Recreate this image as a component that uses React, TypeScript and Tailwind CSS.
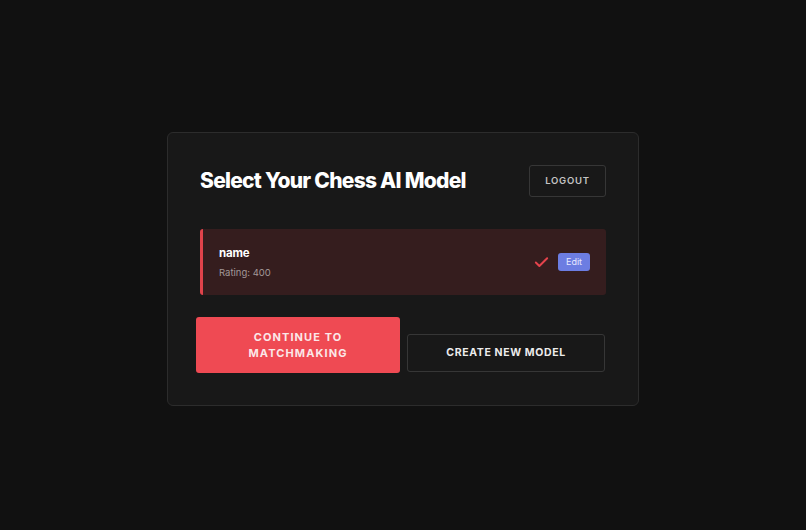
import { Check } from "lucide-react";

interface Model {
  id: string;
  name: string;
  rating: number;
}

const MODELS: Model[] = [{ id: "m1", name: "name", rating: 400 }];

export default function App() {
  const selected = "m1";

  return (
    <div
      className="min-h-screen w-full bg-[#111111] flex items-center justify-center pt-2"
      style={{ fontFamily: "Inter, 'Noto Sans', sans-serif" }}
    >
      <div className="w-[472px] rounded-[6px] border border-[#2c2c2c] bg-[#181818] px-[32px] py-[32px]">
        {/* Header */}
        <div className="flex items-center justify-between">
          <h1 className="text-[21px] font-extrabold tracking-[-0.035em] text-white">
            Select Your Chess AI Model
          </h1>
          <button className="h-[32px] w-[77px] rounded-[3px] border border-[#363636] text-[9.5px] font-semibold tracking-[0.08em] text-[#c4c4c4]">
            LOGOUT
          </button>
        </div>

        {/* Model list */}
        <div className="mt-[32px] flex flex-col gap-2">
          {MODELS.map((model) => (
            <div
              key={model.id}
              className="flex h-[66px] items-center justify-between rounded-[3px] border-l-[3px] border-[#e0434b] bg-[#351d1e] pl-[16px] pr-[16px]"
            >
              <div className="flex flex-col">
                <span className="text-[11.5px] font-bold leading-[16px] tracking-[-0.02em] text-white">
                  {model.name}
                </span>
                <span className="mt-[5px] text-[9.5px] leading-[14px] text-[#a39898]">
                  Rating: {model.rating}
                </span>
              </div>
              <div className="flex items-center gap-[8px]">
                {selected === model.id && (
                  <Check className="h-[17px] w-[17px] text-[#e5434c]" strokeWidth={2.75} />
                )}
                <button className="h-[18px] w-[32px] rounded-[3px] bg-[#6c7de2] text-[9px] leading-[18px] text-[#e6e9ff]">
                  Edit
                </button>
              </div>
            </div>
          ))}
        </div>

        {/* Actions */}
        <div className="mt-[22px] -ml-[4px] flex items-end gap-[7px]">
          <button className="h-[56px] w-[204px] rounded-[3px] bg-[#ef4a53] text-[11px] font-bold leading-[16px] tracking-[0.1em] text-[#fbe7e8]">
            CONTINUE TO
            <br />
            MATCHMAKING
          </button>
          <button className="mb-[1px] h-[38px] w-[198px] rounded-[3px] border border-[#363636] text-[10.5px] font-bold tracking-[0.06em] text-[#ececec]">
            CREATE NEW MODEL
          </button>
        </div>
      </div>
    </div>
  );
}
